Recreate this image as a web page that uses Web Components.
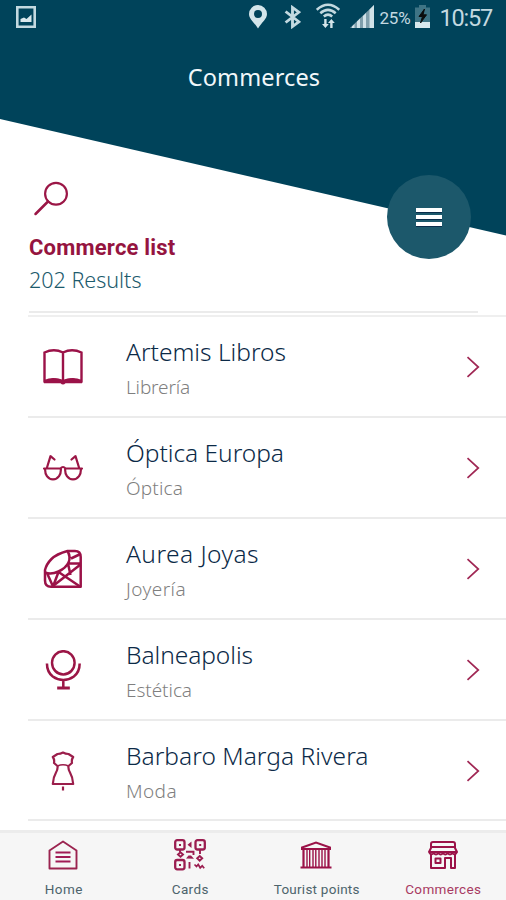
<!DOCTYPE html>
<html lang="en">
<head>
<meta charset="utf-8">
<title>Commerces</title>
<style>
html,body{margin:0;padding:0;background:#fff}
body{width:506px;height:900px;overflow:hidden;font-family:"Noto Sans","Open Sans",sans-serif}
</style>
</head>
<body>
<commerce-app></commerce-app>
<script>
const ICONS = {
  picture: ['0 0 20 22', '<path fill-rule="evenodd" d="M0 0H20V22H0ZM2.6 2.6V19.4H17.4V2.6Z" fill="#c3d9e0"/><path d="M4.5 16V13L8 11.5L10.5 13L15.5 8.500V16Z" fill="#d9e8ec"/>'],
  pin: ['0 0 18 24', '<path fill-rule="evenodd" d="M9 0A9 9 0 0 0 0 9C0 14 5 17 9 23.500C13 17 18 14 18 9A9 9 0 0 0 9 0ZM9 5A4 4 0 1 1 9 13A4 4 0 0 1 9 5Z" fill="#d3e5ea"/>'],
  bluetooth: ['0 0 16 24', '<path d="M1.500 6.500L14 16.800L8 21.500V2.500L14 7.200L1.500 17.500" fill="none" stroke="#c3d9e0" stroke-width="2.700"/>'],
  wifi: ['0 0 24 26', '<g fill="none" stroke="#c3d9e0" stroke-width="2.500"><path d="M.8 6.800Q12-3.200 23.200 6.800M4.300 10.300Q12 3.500 19.700 10.300M7.800 13.500Q12 9.700 16.200 13.500"/></g><path d="M8.200 16h2.400v5h2.200l-3.400 4-3.400-4h2.200ZM14.200 25h2.400v-5h2.200l-3.400-4-3.400 4h2.200Z" fill="#d3e5ea"/>'],
  signal: ['0 0 24 24', '<path d="M24 0V23H0Z" fill="#7f9fac"/><path d="M2 23V21.500L4.500 19V23ZM7 23V16.500L10 13.500V23ZM13 23V11L16 8V23ZM19.500 23V4.500L24 0V23Z" fill="#d0e2e8"/>'],
  battery: ['0 0 15 23', '<path d="M4 0h7v2.500h4V17H0V2.500h4Z" fill="#3e7485"/><path d="M0 17H15V23H0Z" fill="#d8e8ed"/><path d="M9.500 4L4 11.500h3.500L5.500 18L11.500 9.800H8Z" fill="#0a0c0c" stroke="#0a0c0c"/>'],
  search: ['0 0 36 36', '<g fill="none" stroke="#9b1646"><circle cx="23" cy="12.800" r="10.900" stroke-width="2.200"/><path d="M15 20.500L2.500 33" stroke-width="2.500" stroke-linecap="round"/></g>'],
  book: ['0 0 40 36', '<path d="M1.500 3.500Q11-1 20 3.500Q29-1 38.500 3.500V32Q29 28 20 32.500Q11 28 1.500 32ZM20 3.500V33" fill="none" stroke="#9b1248" stroke-width="2.400"/><path d="M1 30.800Q6 31.500 9 29.500Q15 28.500 20 31Q25 28.500 31 29.500Q34 31.500 39 30.800V34.200H22.500Q20 37 17.500 34.200H1Z" fill="#9b1248"/>'],
  glasses: ['0 0 40 27', '<g fill="none" stroke="#9b1646" stroke-width="2.200" stroke-linejoin="round" stroke-linecap="round"><path d="M1 14.500H17.500Q20 11.500 22.500 14.500H39M2.200 14.500C1.700 20.500 4.700 25.300 10 25.300S18.300 20.500 17.800 14.500M22.200 14.500C21.700 20.500 24.700 25.300 30 25.300S38.300 20.500 37.800 14.500M4 13.500L7.500 2.200L11.500 5.500M36 13.500L32.500 2.200L28.500 5.500"/></g>'],
  diamond: ['0 0 40 40', '<g fill="none" stroke="#9b1248" stroke-width="2.500" stroke-linejoin="round"><path d="M24.500 2H32Q37.700 2 37.700 8V37.700H8Q2 37.700 2 31.500V21Q3.500 15 8.500 10T24.500 2Z"/><path d="M24.500 2Q28 8 25.500 13.500T15.500 22.500T2 23.500M28 9.500L37.500 5M25.500 14.500H37.500M25 14.500L27.500 26M37.500 15.500L10 37M37 37.500L15.500 23L10 37.500L4 24"/></g>'],
  mirror: ['0 0 38 40', '<g fill="none" stroke="#9b1646"><circle cx="18.800" cy="12.800" r="11.600" stroke-width="2.500"/><path d="M2 13.500Q2 22 8 26.500Q13 30 18.800 30T29.600 26.500Q35.600 22 35.600 13.500M18.800 30V38" stroke-width="2.600"/><path d="M12.500 38H25.500" stroke-width="3"/></g>'],
  dress: ['0 0 24 40', '<g fill="none" stroke="#9b1e4b" stroke-width="2.200" stroke-linejoin="round"><path d="M6.500 3Q9.500 3 12 1.500Q14.500 3 17.500 3L22.200 6Q20.300 8.500 21 12L17.500 15Q17 18 19 21.500Q21.700 26 22.200 33H1.800Q2.300 26 5 21.500Q7 18 6.500 15L3 12Q3.700 8.500 1.800 6Z"/><path d="M6.500 15Q12 12.500 17.500 15" stroke-width="1.500"/><path d="M12 35.500V39.500"/></g>'],
  chevron: ['0 0 14 22', '<path d="M1.500 1.200L12.300 11L1.500 20.800" fill="none" stroke="#a02754" stroke-width="1.700"/>'],
  home: ['0 0 30 30', '<g fill="none" stroke="#9b2450" stroke-width="1.900"><path d="M1.500 28.500V10.500L15 1.500L28.500 10.500V28.500Z" stroke-linejoin="round"/><path d="M7.500 12.500H22.500M7.500 17H22.500M7.500 21.500H22.500" stroke="#a01a55"/></g>'],
  qr: ['0 0 32 32', '<g fill="none" stroke="#9b1d50" stroke-width="2.300"><rect x="1.200" y="1.200" width="9.300" height="9.300" rx="2"/><rect x="21.500" y="1.200" width="9.300" height="9.300" rx="2"/><rect x="1.200" y="21" width="9.300" height="9.300" rx="2"/><path d="M4 15.500L6.500 13.300L9 15.500L6.500 17.700ZM6 11v2M26 11v4M12 12.800H19.500V16M25.700 17l2.500 2.300-2.500 2.300-2.500-2.300ZM15.500 23v6.500" stroke-width="1.900"/><path d="M20.500 25.500l2 2 1.700-2 2 3.300 2-2 2 2.500" stroke-width="1.700"/></g><path d="M5 5h2v2H5ZM25.200 5h2v2h-2ZM5 25h2v2H5ZM13.500 5.800L17.500 2.500V9ZM12 19.500L14.500 16.500H17L20 19.800Z" fill="#9b1d50"/>'],
  museum: ['0 0 32 28', '<g fill="none" stroke="#9b1248"><path d="M2 8V6.500L16 1.500L30 6.500V8" stroke-width="2"/><path d="M1 8H31M.5 26.500H31.500" stroke-width="2.200"/><path d="M3.500 9V26M28.500 9V26" stroke-width="2.200"/><path d="M7 9V26M9.700 9V26M13 9V26M15.800 9V26M19 9V26M22 9V26M25 9V26" stroke-width="1.400"/></g>'],
  shop: ['0 0 30 28', '<g fill="none" stroke="#9b1248" stroke-width="2" stroke-linejoin="round"><path d="M5 1H25Q27 1 27 3V7L29 11H1L3 7V3Q3 1 5 1ZM3 6H27M1 11Q3.300 15 5.700 12Q8 15 10.300 12Q12.700 15 15 12Q17.300 15 19.700 12Q22 15 24.300 12Q26.700 15 29 11M3 13V27H17V17H23V27H27V13M7.500 17.500H12.500V22H7.500Z"/></g>']
};

/* Base class: renders a shadow root made of a style and markup. */
class Base extends HTMLElement {
  constructor(){ super(); this.attachShadow({mode:'open'}); }
  a(n){ return this.getAttribute(n) || ''; }
  connectedCallback(){ this.shadowRoot.innerHTML = this.render(); }
}

/* Icon: name, width and height in pixels. */
customElements.define('app-icon', class extends Base {
  render(){
    const [box, body] = ICONS[this.a('name')];
    return `<style>:host{display:block;flex:none}svg{display:block}</style>
      <svg width="${this.a('w')}" height="${this.a('h')}" viewBox="${box}" preserveAspectRatio="none">${body}</svg>`;
  }
});

/* One-line label tracked out or in to occupy a given width. */
customElements.define('app-label', class extends Base {
  render(){ return `<style>:host{display:block;width:max-content;white-space:nowrap}</style><slot></slot>`; }
  connectedCallback(){
    super.connectedCallback();
    const target = +this.a('w'), n = this.textContent.length;
    const natural = this.getBoundingClientRect().width;
    this.style.letterSpacing = ((target - natural) / n).toFixed(3) + 'px';
  }
});

customElements.define('status-bar', class extends Base {
  render(){ return `<style>
    :host{display:flex;align-items:flex-start;height:36px;padding:0 14px 0 16px;box-sizing:border-box;color:#c3d9e0;font-family:Roboto,sans-serif}
    .gap{flex:1}
    app-label{line-height:24px}
    .pct{font-size:17px;margin:6px 4px 0 6px}.time{font-size:23.500px;margin:6px 0 0 10px}
    </style>
    <app-icon name="picture" w="20" h="22" style="margin-top:6px"></app-icon><span class="gap"></span>
    <app-icon name="pin" w="18" h="24" style="margin:5px 17px 0 0"></app-icon>
    <app-icon name="bluetooth" w="17" h="24" style="margin:5px 15px 0 0"></app-icon>
    <app-icon name="wifi" w="24" h="26" style="margin:3px 10px 0 0"></app-icon>
    <app-icon name="signal" w="24" h="24" style="margin-top:5px"></app-icon>
    <app-label class="pct" w="31">25%</app-label>
    <app-icon name="battery" w="15" h="23" style="margin-top:5px"></app-icon>
    <app-label class="time" w="52.500">10:57</app-label>`; }
});

customElements.define('app-header', class extends Base {
  render(){ return `<style>
    :host{display:block;height:237px;background:#00435a;clip-path:polygon(0 0,506px 0,506px 235.500px,0 119px)}
    .title{display:flex;justify-content:center;padding:24px 0 0 2px;color:#f2f8fa;font-size:23.500px;line-height:34px}
    </style><status-bar></status-bar><div class="title"><slot></slot></div>`; }
});

customElements.define('menu-button', class extends Base {
  render(){ return `<style>
    :host{display:flex;flex-direction:column;align-items:center;justify-content:center;gap:3px;width:84px;height:84px;border-radius:50%;background:#1c586b}
    i{width:26px;height:4px;background:#fff;box-shadow:0 1px 0 #0a2c4a}
    </style><i></i><i></i><i></i>`; }
});

customElements.define('list-heading', class extends Base {
  render(){ return `<style>
    :host{display:block;padding:0 28px 0 29px}
    app-icon{margin-left:4px}
    .t{margin-top:16px;font:700 22px/30px Roboto,sans-serif;color:#951440}
    .s{margin-top:1px;font-size:21.500px;line-height:32px;font-weight:300;color:#1c5a6c}
    .rule{height:2px;background:#ebebeb;margin-top:15px}
    </style>
    <app-icon name="search" w="36" h="36"></app-icon>
    <app-label class="t" w="146.500">Commerce list</app-label>
    <app-label class="s" w="112.500">202 Results</app-label>
    <div class="rule"></div>`; }
});

customElements.define('commerce-row', class extends Base {
  render(){ return `<style>
    :host{display:flex;height:100.900px;margin-left:28px;box-sizing:border-box;border-bottom:2px solid #ebebeb;padding-right:26px}
    .ic{width:70px;display:grid;place-items:center;flex:none;padding-top:1px}
    .tx{flex:1;padding:17px 0 0 28px}
    .n{font-size:24.500px;line-height:36px;color:#0b2a47;font-weight:300}
    .k{font-size:19px;line-height:28px;margin-top:3px;color:#7f7f7f;font-weight:300}
    .go{align-self:center;padding-top:2px}
    </style>
    <div class="ic"><app-icon name="${this.a('icon')}" w="${this.a('iw')}" h="${this.a('ih')}"></app-icon></div>
    <div class="tx"><app-label class="n" w="${this.a('nw')}">${this.a('name')}</app-label>
    <app-label class="k" w="${this.a('kw')}">${this.a('kind')}</app-label></div>
    <app-icon class="go" name="chevron" w="14" h="22"></app-icon>`; }
});

customElements.define('tab-item', class extends Base {
  render(){ return `<style>
    :host{display:flex;flex-direction:column;align-items:center;flex:1;color:#4d646c}
    :host([active]){color:#a83a62}
    .i{height:46px;display:flex;align-items:center}
    app-label{font:13.500px/22px Roboto,sans-serif;margin:1px 0 0 1px}
    </style><div class="i"><app-icon name="${this.a('icon')}" w="${this.a('iw')}" h="${this.a('ih')}"></app-icon></div>
    <app-label w="${this.a('lw')}">${this.a('label')}</app-label>`; }
});

customElements.define('tab-bar', class extends Base {
  render(){ return `<style>
    :host{display:flex;height:70px;box-sizing:border-box;border-top:3px solid #ececec;background:#f6f6f6}
    </style><slot></slot>`; }
});

customElements.define('commerce-app', class extends Base {
  render(){ return `<style>
    :host{display:flex;flex-direction:column;width:506px;height:900px;position:relative;overflow:hidden;background:#fff}
    list-heading{margin-top:-56px}
    menu-button{position:absolute;left:387px;top:175px}
    .list{flex:1;min-height:0;overflow:hidden;padding-top:2px}
    .top{height:2px;margin-left:28px;background:#efefef}
    </style>
    <app-header><app-label w="132.500">Commerces</app-label></app-header>
    <list-heading></list-heading>
    <menu-button></menu-button>
    <div class="list"><div class="top"></div>
      <commerce-row icon="book" iw="40" ih="36" name="Artemis Libros" nw="160" kind="Librería" kw="64"></commerce-row>
      <commerce-row icon="glasses" iw="40" ih="27" name="Óptica Europa" nw="158" kind="Óptica" kw="57"></commerce-row>
      <commerce-row icon="diamond" iw="40" ih="40" name="Aurea Joyas" nw="133" kind="Joyería" kw="60"></commerce-row>
      <commerce-row icon="mirror" iw="37" ih="40" name="Balneapolis" nw="127" kind="Estética" kw="66"></commerce-row>
      <commerce-row icon="dress" iw="24" ih="40" name="Barbaro Marga Rivera" nw="242.500" kind="Moda" kw="51"></commerce-row>
    </div>
    <tab-bar>
      <tab-item icon="home" iw="30" ih="30" label="Home" lw="38"></tab-item>
      <tab-item icon="qr" iw="32" ih="32" label="Cards" lw="37"></tab-item>
      <tab-item icon="museum" iw="32" ih="28" label="Tourist points" lw="86"></tab-item>
      <tab-item icon="shop" iw="30" ih="28" label="Commerces" lw="76" active></tab-item>
    </tab-bar>`; }
});
</script>
</body>
</html>
